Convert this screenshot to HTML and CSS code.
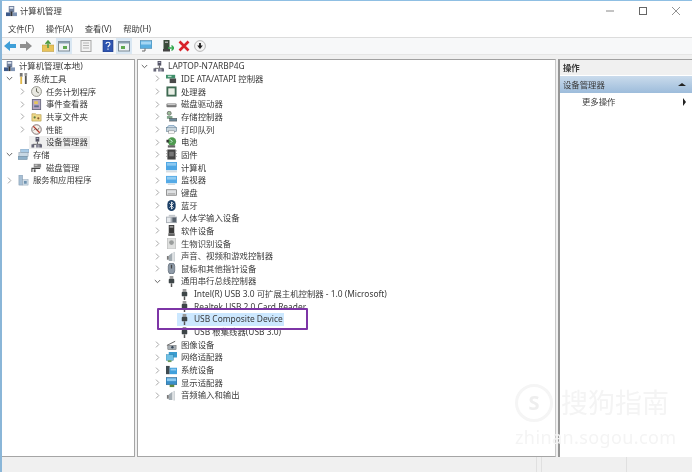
FILE: index.html
```html
<!DOCTYPE html>
<html lang="zh-CN">
<head>
<meta charset="utf-8">
<title>计算机管理</title>
<link rel="stylesheet" href="styles.css">
</head>
<body>
<svg class="sprite" xmlns="http://www.w3.org/2000/svg">
  <symbol id="open" viewBox="0 0 7 7"><path d="M.8 2l2.7 2.7L6.2 2" fill="none" stroke="#666" stroke-width="1"/></symbol>
  <symbol id="closed" viewBox="0 0 7 7"><path d="M2 .6l2.8 2.9L2 6.4" fill="none" stroke="#a8a8a8" stroke-width="1"/></symbol>
  <symbol id="mgmt" viewBox="0 0 12 12"><rect x="3" y="0" width="6" height="7" fill="#6f7f9c"/><rect x="4" y="1" width="4" height="2" fill="#dfe6f0"/><rect x="0" y="7" width="5" height="4" fill="#3d5a8a"/><rect x="7" y="7" width="5" height="4" fill="#8095b5"/><rect x="5" y="6" width="2" height="5" fill="#333"/></symbol>
  <symbol id="tools" viewBox="0 0 12 12"><rect x="2" y="0" width="3" height="4" fill="#777"/><rect x="2.5" y="4" width="2" height="8" fill="#e0b84a"/><rect x="7" y="0" width="3" height="3" fill="#999"/><rect x="7.5" y="3" width="2" height="9" fill="#555"/></symbol>
  <symbol id="clock" viewBox="0 0 12 12"><circle cx="6" cy="6" r="5.4" fill="#e9e9e2" stroke="#8c8c86" stroke-width="1"/><path d="M6 2.5V6l2.5 1.5" fill="none" stroke="#5a5a4a" stroke-width="1"/></symbol>
  <symbol id="event" viewBox="0 0 12 12"><rect x="1.5" y="0.5" width="9" height="11" fill="#b6a6c4" stroke="#6a6a80"/><rect x="3.5" y="2.5" width="4" height="3" fill="#e6c65a"/><rect x="3.5" y="7" width="5" height="2" fill="#5f6a8a"/></symbol>
  <symbol id="share" viewBox="0 0 12 12"><path d="M1 3h4l1 1h5v7H1z" fill="#efd98a" stroke="#b49a4a" stroke-width=".7"/><circle cx="4" cy="7" r="1.2" fill="#5a7a40"/><circle cx="8" cy="8" r="1.2" fill="#8a5a30"/></symbol>
  <symbol id="perf" viewBox="0 0 12 12"><circle cx="6" cy="6" r="5.2" fill="#f3efe9" stroke="#7a6a6a"/><path d="M2.5 2.5l7 7" stroke="#c0392b" stroke-width="1.3"/><path d="M3 7l2-2 2 2 2-3" fill="none" stroke="#444" stroke-width=".7"/></symbol>
  <symbol id="dev" viewBox="0 0 12 12"><rect x="5" y="0" width="4" height="5" fill="#556"/><rect x="6" y="1" width="2" height="1" fill="#ccd"/><path d="M7 5v3M2 8h9" stroke="#555" fill="none"/><rect x="0.5" y="8" width="3" height="3.5" fill="#667"/><rect x="5.5" y="8" width="3" height="3.5" fill="#889"/><rect x="9" y="8" width="3" height="3.5" fill="#667"/></symbol>
  <symbol id="storage" viewBox="0 0 12 12"><rect x="3" y="0" width="9" height="4" fill="#a9cbe6" stroke="#7c9ab5" stroke-width=".6"/><rect x="1" y="4" width="10" height="4" fill="#c8d8e4" stroke="#8c9cab" stroke-width=".6"/><rect x="0" y="8" width="10" height="3.5" fill="#8fb0c8" stroke="#6c8a9f" stroke-width=".6"/></symbol>
  <symbol id="diskm" viewBox="0 0 12 12"><rect x="3" y="2" width="8" height="4" fill="#8a8a8a"/><rect x="4" y="3" width="3" height="1" fill="#ddd"/><path d="M1 11V7h9" fill="none" stroke="#444" stroke-width="1.2"/><rect x="3" y="8" width="2" height="3" fill="#555"/></symbol>
  <symbol id="services" viewBox="0 0 12 12"><rect x="1" y="0" width="4" height="11" fill="#a7bfd4" stroke="#7890a6" stroke-width=".5"/><rect x="5" y="5" width="6" height="6" fill="#cfdce6" stroke="#8aa0b2" stroke-width=".5"/><rect x="6.5" y="6.5" width="3" height="3" fill="#6f93b0"/></symbol>
  <symbol id="ide" viewBox="0 0 12 12"><rect x="0" y="2" width="10" height="4" fill="#3f8f6a"/><rect x="4" y="6" width="7" height="5" fill="#4a4a4a"/><rect x="2" y="3" width="4" height="1.5" fill="#bfe0cf"/></symbol>
  <symbol id="cpu" viewBox="0 0 12 12"><rect x="0.5" y="0.5" width="11" height="11" fill="#3f6a52"/><rect x="2.5" y="2.5" width="7" height="7" fill="#e9efe6"/></symbol>
  <symbol id="disk" viewBox="0 0 12 12"><rect x="0.5" y="5" width="11" height="4" rx="1" fill="#777"/><rect x="1.5" y="5.5" width="9" height="1.2" fill="#ccc"/></symbol>
  <symbol id="store" viewBox="0 0 12 12"><circle cx="3.5" cy="2.5" r="2.2" fill="#9dbb9a" stroke="#555" stroke-width=".7"/><rect x="1" y="5.5" width="6" height="3" fill="#7fa58a"/><rect x="4" y="8" width="8" height="3" fill="#6d8a9a" stroke="#444" stroke-width=".5"/></symbol>
  <symbol id="printer" viewBox="0 0 12 12"><path d="M1 4l2-2h6l2 2" fill="none" stroke="#4d7fa8" stroke-width="1"/><rect x="0.5" y="4" width="11" height="4" fill="#c9d6de" stroke="#56748a" stroke-width=".6"/><rect x="3" y="7.5" width="6" height="2.5" fill="#fff" stroke="#777" stroke-width=".5"/></symbol>
  <symbol id="battery" viewBox="0 0 12 12"><circle cx="6.5" cy="5" r="4.6" fill="#4f9a50"/><path d="M2 9h8v2.5H2z" fill="#666"/><path d="M4 2.5l3 2-2 2" fill="none" stroke="#dfe" stroke-width=".8"/><rect x="0.5" y="3" width="2.5" height="3" fill="#333"/></symbol>
  <symbol id="firmware" viewBox="0 0 12 12"><rect x="1.5" y="0.5" width="9" height="11" fill="#444"/><rect x="3.5" y="3" width="5" height="5" fill="#777"/><path d="M0 2h2M0 5h2M0 8h2M10 2h2M10 5h2M10 8h2" stroke="#888" stroke-width=".8"/></symbol>
  <symbol id="pc" viewBox="0 0 12 12"><rect x="0" y="0" width="12" height="9" fill="#4ea6e4"/><rect x="0" y="9.4" width="12" height="2" fill="#d7dde2"/><rect x="1" y="1" width="10" height="3" fill="#8cc8f0"/></symbol>
  <symbol id="monitor" viewBox="0 0 12 12"><rect x="0" y="1" width="12" height="8" fill="#55aae6"/><rect x="1" y="2" width="10" height="3" fill="#92ccf2"/><rect x="2" y="9.4" width="8" height="1.4" fill="#cfd6db"/></symbol>
  <symbol id="keyboard" viewBox="0 0 12 12"><rect x="0.5" y="3" width="11" height="6" fill="#dfe1e3" stroke="#777" stroke-width=".8"/><rect x="2" y="7" width="8" height="1" fill="#999"/></symbol>
  <symbol id="bt" viewBox="0 0 12 12"><rect x="1.5" y="0" width="9" height="12" rx="4.5" fill="#1c3f66"/><path d="M3.8 3.6L8 8 6 10V2L8 4 3.8 8.4" fill="none" stroke="#fff" stroke-width=".9"/></symbol>
  <symbol id="hid" viewBox="0 0 12 12"><rect x="0" y="4" width="12" height="7" fill="#a9afb6"/><rect x="1" y="5" width="4" height="5" fill="#e6e9ec"/><rect x="7" y="5" width="4" height="5" fill="#59636e"/><rect x="3" y="2" width="7" height="2" fill="#c3c8cd"/></symbol>
  <symbol id="sw" viewBox="0 0 12 12"><rect x="3" y="0" width="6" height="9" fill="#3a3a3a"/><rect x="4" y="1" width="4" height="2" fill="#999"/><rect x="2.5" y="9" width="7" height="3" fill="#666"/></symbol>
  <symbol id="bio" viewBox="0 0 12 12"><rect x="1.5" y="0" width="9" height="12" fill="#dfe0df" stroke="#b7b8b7" stroke-width=".7"/><circle cx="6" cy="5" r="2.6" fill="#9a9d9c"/></symbol>
  <symbol id="audio" viewBox="0 0 12 12"><path d="M3 5l4-3v9H3z" fill="#a4adb3"/><rect x="8" y="1" width="1.8" height="10.5" fill="#cfd4d7"/><rect x="1" y="5.5" width="2" height="4" fill="#777"/></symbol>
  <symbol id="mouse" viewBox="0 0 12 12"><rect x="2.5" y="0" width="7" height="12" rx="3.4" fill="#8f9ba8" stroke="#5f6a76" stroke-width=".8"/><rect x="5.3" y="2" width="1.4" height="4" fill="#444"/></symbol>
  <symbol id="usb" viewBox="0 0 12 12"><rect x="4" y="0" width="4" height="3" fill="#999"/><rect x="3" y="3" width="6" height="5" rx="1" fill="#3e4648"/><rect x="5.2" y="8" width="1.6" height="4" fill="#555"/></symbol>
  <symbol id="img" viewBox="0 0 12 12"><path d="M1 7l9-4.5" stroke="#555" fill="none"/><rect x="2" y="7" width="9" height="4.5" fill="#a8b0b6" stroke="#555" stroke-width=".5"/><circle cx="7" cy="9" r="1.3" fill="#345"/></symbol>
  <symbol id="net" viewBox="0 0 12 12"><rect x="3" y="0" width="9" height="6" fill="#3a9ccf"/><rect x="0" y="3" width="8" height="6" fill="#6fc0e4" stroke="#2d7fa8" stroke-width=".5"/><rect x="2" y="9" width="4" height="2" fill="#6b9a5a"/></symbol>
  <symbol id="sys" viewBox="0 0 12 12"><rect x="0" y="1" width="4" height="9" fill="#3e4a50"/><rect x="4" y="3" width="8" height="7" fill="#3fa0dc"/><rect x="5" y="4" width="6" height="2" fill="#8cc8ee"/></symbol>
  <symbol id="display" viewBox="0 0 12 12"><rect x="0" y="0.5" width="12" height="8" fill="#3a8fc8" stroke="#2d5a7a" stroke-width=".5"/><rect x="1" y="1.5" width="10" height="3" fill="#8ccaf0"/><rect x="4" y="8.5" width="5" height="2.5" fill="#5f8a40"/></symbol>
</svg>

<div class="window">
  <header class="titlebar">
    <svg class="ico"><use href="#mgmt"/></svg>
    <span class="title">计算机管理</span>
    <div class="winbtns">
      <svg class="winbtn" viewBox="0 0 10 10"><path d="M1 5h8" stroke="#888" fill="none"/></svg>
      <svg class="winbtn" viewBox="0 0 10 10"><rect x="1.5" y="1.5" width="7" height="7" stroke="#666" fill="none"/></svg>
      <svg class="winbtn" viewBox="0 0 10 10"><path d="M1 1l8 8M9 1l-8 8" stroke="#777" fill="none" stroke-width=".8"/></svg>
    </div>
  </header>

  <nav class="menubar">
    <span>文件(F)</span><span>操作(A)</span><span>查看(V)</span><span>帮助(H)</span>
  </nav>

  <div class="toolbar">
    <div class="tgroup">
      <span class="tool"><svg viewBox="0 0 12 12"><path d="M0 6l6-5v3h6v4H6v3z" fill="#3f9fd8"/></svg></span>
      <span class="tool"><svg viewBox="0 0 12 12"><path d="M12 6L6 1v3H0v4h6v3z" fill="#8f8f8f"/></svg></span>
    </div>
    <div class="tgroup">
      <span class="tool"><svg viewBox="0 0 12 12"><path d="M0 5h12v6.5H0z" fill="#e8c35a" stroke="#b3923e" stroke-width=".5"/><path d="M6 8V2M3.5 4L6 1l2.5 3" fill="none" stroke="#4f9a40" stroke-width="1.5"/></svg></span>
      <span class="tool on"><svg viewBox="0 0 12 12"><rect x="0.5" y="1.5" width="11" height="9.5" fill="#eef2f4" stroke="#7c8a94"/><rect x="0.5" y="1.5" width="11" height="2" fill="#8aa0b0"/><rect x="5" y="6" width="4" height="3" fill="#5fa84f"/></svg></span>
    </div>
    <div class="tgroup">
      <span class="tool"><svg viewBox="0 0 12 12"><rect x="1" y="0.5" width="10" height="11" fill="#f2f2f2" stroke="#a8a8a8"/><path d="M3 3h6M3 5.5h6M3 8h6" stroke="#b5b5b5"/></svg></span>
    </div>
    <div class="tgroup">
      <span class="tool"><svg viewBox="0 0 12 12"><rect x="1" y="0" width="10" height="12" fill="#2f55b0" stroke="#1e3a80" stroke-width=".6"/><path d="M4 4c0-2.4 4-2.4 4 0 0 1.5-2 1.5-2 3.2M6 8.6v1.2" fill="none" stroke="#fff" stroke-width="1.1"/></svg></span>
      <span class="tool on"><svg viewBox="0 0 12 12"><rect x="0.5" y="1.5" width="11" height="9.5" fill="#eef2f4" stroke="#7c8a94"/><rect x="0.5" y="1.5" width="11" height="2" fill="#8aa0b0"/><rect x="3" y="6" width="4" height="3" fill="#5fa84f"/></svg></span>
    </div>
    <div class="tgroup">
      <span class="tool"><svg viewBox="0 0 12 12"><rect x="0" y="0.5" width="12" height="8" fill="#5aaee0" stroke="#4a7a9a" stroke-width=".5"/><rect x="1" y="1.5" width="10" height="3" fill="#a5d6f4"/><path d="M5 8.5v2.5H2" fill="none" stroke="#666"/></svg></span>
    </div>
    <div class="tgroup">
      <span class="tool"><svg viewBox="0 0 12 12"><rect x="1.5" y="0" width="6" height="9" fill="#3a4a3a"/><rect x="3" y="1.5" width="3" height="1.5" fill="#aaa"/><rect x="1" y="9" width="7" height="2.5" fill="#444"/><path d="M6 8h6M9.5 5.5L12 8 9.5 10.5" fill="none" stroke="#35a84f" stroke-width="1.4"/></svg></span>
      <span class="tool"><svg viewBox="0 0 12 12"><path d="M1.5 1.5l9 9M10.5 1.5l-9 9" stroke="#d8232a" stroke-width="2.6"/></svg></span>
      <span class="tool"><svg viewBox="0 0 12 12"><circle cx="6" cy="6" r="5.4" fill="#f4f4f4" stroke="#a8a8a8" stroke-width=".8"/><path d="M6 3v3" stroke="#222" stroke-width="1.8"/><path d="M3.2 5.5h5.6L6 9z" fill="#222"/></svg></span>
    </div>
  </div>

  <main class="panes">
    <section class="pane left">
      <div class="row root"><svg class="ico"><use href="#mgmt"/></svg><span>计算机管理(本地)</span></div>
      <div class="row i1"><svg class="chev"><use href="#open"/></svg><svg class="ico"><use href="#tools"/></svg><span>系统工具</span></div>
      <div class="row i2"><svg class="chev"><use href="#closed"/></svg><svg class="ico"><use href="#clock"/></svg><span>任务计划程序</span></div>
      <div class="row i2"><svg class="chev"><use href="#closed"/></svg><svg class="ico"><use href="#event"/></svg><span>事件查看器</span></div>
      <div class="row i2"><svg class="chev"><use href="#closed"/></svg><svg class="ico"><use href="#share"/></svg><span>共享文件夹</span></div>
      <div class="row i2"><svg class="chev"><use href="#closed"/></svg><svg class="ico"><use href="#perf"/></svg><span>性能</span></div>
      <div class="row i2"><span class="chev"></span><span class="selected"><svg class="ico"><use href="#dev"/></svg><span>设备管理器</span></span></div>
      <div class="row i1"><svg class="chev"><use href="#open"/></svg><svg class="ico"><use href="#storage"/></svg><span>存储</span></div>
      <div class="row i2"><span class="chev"></span><svg class="ico"><use href="#diskm"/></svg><span>磁盘管理</span></div>
      <div class="row i1"><svg class="chev"><use href="#closed"/></svg><svg class="ico"><use href="#services"/></svg><span>服务和应用程序</span></div>
    </section>

    <section class="pane center">
      <div class="row c0"><svg class="chev"><use href="#open"/></svg><svg class="ico"><use href="#dev"/></svg><span>LAPTOP-N7ARBP4G</span></div>
      <div class="row c1"><svg class="chev"><use href="#closed"/></svg><svg class="ico"><use href="#ide"/></svg><span>IDE ATA/ATAPI 控制器</span></div>
      <div class="row c1"><svg class="chev"><use href="#closed"/></svg><svg class="ico"><use href="#cpu"/></svg><span>处理器</span></div>
      <div class="row c1"><svg class="chev"><use href="#closed"/></svg><svg class="ico"><use href="#disk"/></svg><span>磁盘驱动器</span></div>
      <div class="row c1"><svg class="chev"><use href="#closed"/></svg><svg class="ico"><use href="#store"/></svg><span>存储控制器</span></div>
      <div class="row c1"><svg class="chev"><use href="#closed"/></svg><svg class="ico"><use href="#printer"/></svg><span>打印队列</span></div>
      <div class="row c1"><svg class="chev"><use href="#closed"/></svg><svg class="ico"><use href="#battery"/></svg><span>电池</span></div>
      <div class="row c1"><svg class="chev"><use href="#closed"/></svg><svg class="ico"><use href="#firmware"/></svg><span>固件</span></div>
      <div class="row c1"><svg class="chev"><use href="#closed"/></svg><svg class="ico"><use href="#pc"/></svg><span>计算机</span></div>
      <div class="row c1"><svg class="chev"><use href="#closed"/></svg><svg class="ico"><use href="#monitor"/></svg><span>监视器</span></div>
      <div class="row c1"><svg class="chev"><use href="#closed"/></svg><svg class="ico"><use href="#keyboard"/></svg><span>键盘</span></div>
      <div class="row c1"><svg class="chev"><use href="#closed"/></svg><svg class="ico"><use href="#bt"/></svg><span>蓝牙</span></div>
      <div class="row c1"><svg class="chev"><use href="#closed"/></svg><svg class="ico"><use href="#hid"/></svg><span>人体学输入设备</span></div>
      <div class="row c1"><svg class="chev"><use href="#closed"/></svg><svg class="ico"><use href="#sw"/></svg><span>软件设备</span></div>
      <div class="row c1"><svg class="chev"><use href="#closed"/></svg><svg class="ico"><use href="#bio"/></svg><span>生物识别设备</span></div>
      <div class="row c1"><svg class="chev"><use href="#closed"/></svg><svg class="ico"><use href="#audio"/></svg><span>声音、视频和游戏控制器</span></div>
      <div class="row c1"><svg class="chev"><use href="#closed"/></svg><svg class="ico"><use href="#mouse"/></svg><span>鼠标和其他指针设备</span></div>
      <div class="row c1"><svg class="chev"><use href="#open"/></svg><svg class="ico"><use href="#usb"/></svg><span>通用串行总线控制器</span></div>
      <div class="row c2"><span class="chev"></span><svg class="ico"><use href="#usb"/></svg><span>Intel(R) USB 3.0 可扩展主机控制器 - 1.0 (Microsoft)</span></div>
      <div class="row c2"><span class="chev"></span><svg class="ico"><use href="#usb"/></svg><span>Realtek USB 2.0 Card Reader</span></div>
      <div class="row c2"><span class="chev"></span><span class="hilite"><svg class="ico"><use href="#usb"/></svg><span>USB Composite Device</span></span></div>
      <div class="row c2"><span class="chev"></span><svg class="ico"><use href="#usb"/></svg><span>USB 根集线器(USB 3.0)</span></div>
      <div class="row c1"><svg class="chev"><use href="#closed"/></svg><svg class="ico"><use href="#img"/></svg><span>图像设备</span></div>
      <div class="row c1"><svg class="chev"><use href="#closed"/></svg><svg class="ico"><use href="#net"/></svg><span>网络适配器</span></div>
      <div class="row c1"><svg class="chev"><use href="#closed"/></svg><svg class="ico"><use href="#sys"/></svg><span>系统设备</span></div>
      <div class="row c1"><svg class="chev"><use href="#closed"/></svg><svg class="ico"><use href="#display"/></svg><span>显示适配器</span></div>
      <div class="row c1"><svg class="chev"><use href="#closed"/></svg><svg class="ico"><use href="#audio"/></svg><span>音频输入和输出</span></div>
    </section>

    <aside class="pane right">
      <div class="act-head">操作</div>
      <div class="act-section"><span>设备管理器</span><i class="tri-up"></i></div>
      <div class="act-item"><span>更多操作</span><i class="tri-right"></i></div>
    </aside>
  </main>

  <footer class="status">
    <span class="cell grow"></span><span class="cell narrow"></span><span class="cell mid"></span><span class="cell last"></span>
  </footer>

  <div class="callout"></div>

  <div class="watermark">
    <div class="wm-top"><span class="wm-logo">S</span><span class="wm-name">搜狗指南</span></div>
    <div class="wm-url">zhinan.sogou.com</div>
  </div>
</div>
</body>
</html>
```

FILE: styles.css
```css
* { box-sizing: border-box; }
html, body { margin: 0; height: 100%; background: #fff; overflow: hidden; }
.sprite { display: none; }

.window {
  position: relative;
  width: 692px;
  height: 472px;
  display: flex;
  flex-direction: column;
  border-top: 1px solid #8fbfe3;
  border-left: 2px solid #8ab6d8;
  background: #fff;
  color: #3a3a3a;
  font: 8.4px/12px "Noto Sans", "Noto Sans CJK SC", sans-serif;
  filter: blur(0.35px);
}

.ico { width: 11px; height: 11px; flex: none; }

.titlebar { height: 20px; display: flex; align-items: center; padding: 0 0 0 4px; }
.title { margin-left: 3px; }
.winbtns { margin-left: auto; display: flex; padding-right: 11px; gap: 23px; }
.winbtn { width: 10px; height: 10px; }

.menubar {
  height: 17px;
  display: flex;
  align-items: center;
  gap: 11.7px;
  padding: 0 0 0 6px;
  border-bottom: 1px solid #dcdcdc;
}

.toolbar {
  height: 17px;
  display: flex;
  gap: 6px;
  background: #f7f8f9;
  border-bottom: 1px solid #e6e6e6;
}
.tgroup { display: flex; }
.tool { width: 16px; height: 16px; display: flex; align-items: center; justify-content: center; }
.tool svg { width: 12px; height: 12px; }
.tool.on { background: #d9e7f3; }

.panes {
  flex: 1;
  min-height: 0;
  display: grid;
  grid-template-columns: 133px 419px 1fr;
  gap: 2px;
  padding-top: 4px;
  background: #f0f0f0;
}
.pane { background: #fff; border-top: 1px solid #a0a0a0; overflow: hidden; }
.left { border-right: 1px solid #a5a5a5; border-bottom: 1px solid #a5a5a5; }
.center { border-left: 1px solid #a5a5a5; border-right: 1px solid #c8c8c8; border-bottom: 1px solid #a5a5a5; padding-left: 2px; }
.right { border-left: 2px solid #969696; }

.row { height: 12.66px; display: flex; align-items: center; white-space: nowrap; }
.row .ico { margin-right: 4px; }
.chev { width: 7px; height: 7px; flex: none; margin: 0 5px 0 1px; }
.root { padding-left: 2px; }
.i1 { padding-left: 3px; }
.i2 { padding-left: 16px; }
.c0 { padding-left: 0; }
.c1 { padding-left: 13px; }
.c2 { padding-left: 26px; }
.selected { display: flex; align-items: center; background: #efefef; height: 100%; padding: 0 2px; margin-left: -2px; }
.hilite { display: flex; align-items: center; background: #cce8ff; height: 100%; padding: 0 1px 0 2px; margin-left: -2px; }

.act-head { height: 15px; padding-left: 3px; background: #f0f0f0; font-weight: 700; display: flex; align-items: center; }
.act-section {
  height: 17px;
  margin-top: 1px;
  padding: 0 6px 0 3px;
  display: flex;
  align-items: center;
  justify-content: space-between;
  background: linear-gradient(#cadbec, #9dbcdb);
}
.act-item { height: 17px; padding: 0 6px 0 22px; display: flex; align-items: center; justify-content: space-between; }
.tri-up { width: 0; height: 0; border: 4px solid transparent; border-top: 0; border-bottom: 3px solid #222; }
.tri-right { width: 0; height: 0; border: 4px solid transparent; border-right: 0; border-left: 3px solid #222; }

.status { height: 15px; display: flex; background: #f0f0f0; }
.cell { border-right: 1px solid #e0e0e0; }
.grow { width: 535px; }
.narrow { width: 5px; }
.mid { width: 85px; }
.last { flex: 1; border-right: 0; }

.callout {
  position: absolute;
  left: 155px;
  top: 307px;
  width: 151px;
  height: 22px;
  border: 2px solid #7d35a6;
  border-radius: 1px;
  pointer-events: none;
}

.watermark { position: absolute; left: 513px; top: 383px; color: #f4f4f4; pointer-events: none; }
.wm-top { display: flex; align-items: center; gap: 8px; }
.wm-logo {
  width: 38px;
  height: 38px;
  border: 3px solid #f5f5f5;
  border-radius: 50%;
  display: flex;
  align-items: center;
  justify-content: center;
  font-size: 20px;
  font-weight: 700;
  color: #eeeeee;
}
.wm-name { font-size: 27px; line-height: 30px; }
.wm-url { margin-top: 5px; font-size: 18px; line-height: 20px; letter-spacing: .4px; }
```
